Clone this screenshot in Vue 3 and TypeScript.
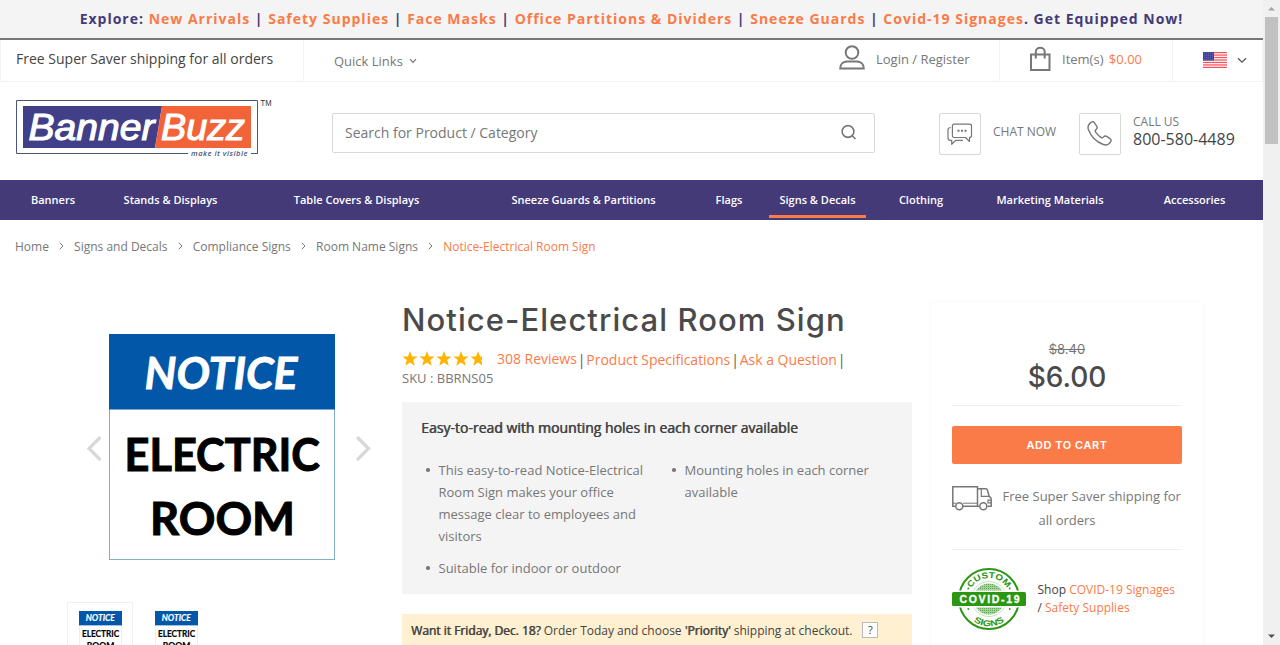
<script setup lang="ts">
interface Crumb { label: string; current?: boolean }

const promos: string[] = [
  'New Arrivals', 'Safety Supplies', 'Face Masks', 'Office Partitions & Dividers', 'Sneeze Guards', 'Covid-19 Signages',
]
const menu: string[] = [
  'Banners', 'Stands & Displays', 'Table Covers & Displays', 'Sneeze Guards & Partitions', 'Flags',
  'Signs & Decals', 'Clothing', 'Marketing Materials', 'Accessories',
]
const activeMenu = 'Signs & Decals'
const crumbs: Crumb[] = [
  { label: 'Home' }, { label: 'Signs and Decals' }, { label: 'Compliance Signs' },
  { label: 'Room Name Signs' }, { label: 'Notice-Electrical Room Sign', current: true },
]
const stars: number[] = [0, 17, 34, 51, 68]
const stripes: number[] = [0, 1, 2, 3, 4, 5, 6]
</script>

<template>
  <div class="window">
    <div class="page">
      <div class="promo">
        <span>Explore: </span>
        <template v-for="(p, i) in promos" :key="p"><a>{{ p }}</a><span>{{ i < promos.length - 1 ? ' | ' : '. ' }}</span></template>
        <span>Get Equipped Now!</span>
      </div>

      <div class="utility">
        <div class="u-ship">Free Super Saver shipping for all orders</div>
        <div class="u-links">Quick Links
          <svg width="8" height="6" viewBox="0 0 8 6"><path d="M1 1.2 L4 4.3 L7 1.2" fill="none" stroke="#777" stroke-width="1.2" /></svg>
        </div>
        <div class="u-login">
          <svg width="26" height="26" viewBox="0 0 26 26" fill="none" stroke="#777" stroke-width="2">
            <circle cx="13" cy="7.5" r="6.3" />
            <path d="M1.2 23.6 C1.2 18.5 4.6 16.6 8 16.6 H18 C21.4 16.6 24.8 18.5 24.8 23.6 Z" />
          </svg>
          <span>Login / Register</span>
        </div>
        <div class="u-cart">
          <svg width="22" height="26" viewBox="0 0 22 26" fill="none" stroke="#777" stroke-width="2">
            <path d="M2 8.5 H20.5 V24 H2 Z" /><path d="M6.8 12.5 V6 C6.8 0.4 15.7 0.4 15.7 6 V12.5" />
          </svg>
          <span>Item(s) <b>$0.00</b></span>
        </div>
        <div class="u-flag">
          <svg width="24" height="16" viewBox="0 0 24 16">
            <rect width="24" height="16" fill="#fff" />
            <rect v-for="s in stripes" :key="s" x="0" :y="s * 2.46" width="24" height="1.25" fill="#f8525c" />
            <rect width="11" height="8.5" fill="#42459b" />
            <g fill="#8d92cb"><template v-for="r in 4" :key="r"><circle v-for="c in 5" :key="c" :cx="c * 2 - 0.6" :cy="r * 2 - 0.7" r="0.4" /></template></g>
          </svg>
          <svg class="caret" width="10" height="7" viewBox="0 0 10 7"><path d="M1 1.2 L5 5.2 L9 1.2" fill="none" stroke="#555" stroke-width="1.3" /></svg>
        </div>
      </div>

      <header class="header">
        <svg class="logo" width="260" height="64" viewBox="0 -2 260 64">
          <path d="M172 53.5 H0.5 V0.5 H241.5 V53.5 H235" fill="none" stroke="#4b5576" />
          <path d="M7 6 H146 L139 48 H7 Z" fill="#403f88" />
          <path d="M146 6 H235 V48 H139 Z" fill="#f26339" />
          <g fill="#fff" stroke="#fff" stroke-width="1.1" font-family="'Liberation Sans', Arial, sans-serif" font-style="italic" font-size="37">
            <text x="12.5" y="40" textLength="126" lengthAdjust="spacingAndGlyphs">Banner</text>
            <text x="145" y="40" textLength="84" lengthAdjust="spacingAndGlyphs">Buzz</text>
          </g>
          <text x="175" y="56" font-family="'Open Sans', sans-serif" font-style="italic" font-weight="600" font-size="7.5" fill="#4b5576" textLength="56.5">make it visible</text>
          <text x="244.5" y="6" font-family="'Liberation Sans', Arial, sans-serif" font-size="8.5" fill="#333" textLength="11" lengthAdjust="spacingAndGlyphs">TM</text>
        </svg>
        <div class="search">
          <span>Search for Product / Category</span>
          <svg width="16" height="16" viewBox="0 0 16 16" fill="none" stroke="#777" stroke-width="1.6"><circle cx="7" cy="7.5" r="5.9" /><path d="M10.5 11 L14.5 15" /></svg>
        </div>
        <div class="icon-box chat">
          <svg width="26" height="23" viewBox="0 0 26 23" fill="none" stroke="#777" stroke-width="1.2" stroke-linejoin="round">
            <path d="M7 1.2 H22.5 Q24.5 1.2 24.5 3 V12.5 Q24.5 14.5 22.5 14.5 V18.5 L18.5 14.5 H7 Q5.4 14.5 5.4 12.5 V3 Q5.4 1.2 7 1.2 Z" />
            <path d="M3.5 4.5 Q1 4.7 1 7 V15 Q1 17.3 3.5 17.3 H4.7 V21.3 L8.8 17.3 H16" />
            <path d="M10.5 7.7 h2 M14 7.7 h2 M17.5 7.7 h2" stroke-width="2" />
          </svg>
        </div>
        <div class="chat-label">CHAT NOW</div>
        <div class="icon-box phone">
          <svg width="25" height="25" viewBox="0 0 25 25" fill="none" stroke="#777" stroke-width="1.4" stroke-linejoin="round">
            <path d="M4.3 1.2 C5.5 0.3 6.7 0.7 7.5 1.9 L9.8 5.3 C10.6 6.6 10.2 7.5 9.2 8.4 C8 9.3 8 10.2 8.8 11.3 C10.3 13.3 12 15 14 16.4 C15.1 17.1 15.8 16.9 16.6 15.9 C17.5 14.8 18.5 14.6 19.7 15.4 L23 17.6 C24.3 18.5 24.5 19.5 23.6 20.8 C21.8 23.6 19.5 24.6 16.3 23.5 C9.5 21 3.8 15.2 1.4 8.5 C0.3 5.3 1.5 3.1 4.3 1.2 Z" />
          </svg>
        </div>
        <div class="call"><span>CALL US</span><strong>800-580-4489</strong></div>
      </header>

      <nav class="menu">
        <a v-for="m in menu" :key="m" :class="{ active: m === activeMenu }">{{ m }}</a>
      </nav>

      <div class="crumbs">
        <template v-for="(c, i) in crumbs" :key="c.label">
          <svg v-if="i > 0" width="5" height="8" viewBox="0 0 5 8"><path d="M0.8 0.8 L4 4 L0.8 7.2" fill="none" stroke="#777" /></svg>
          <span :class="{ current: c.current }">{{ c.label }}</span>
        </template>
      </div>

      <main class="product">
        <section class="gallery">
          <div class="stage">
            <svg width="16" height="26" viewBox="0 0 16 26"><path d="M12.5 3 L2 13.5 L12.5 24" fill="none" stroke="#d8d8d8" stroke-width="3.2" stroke-linecap="round" /></svg>
            <svg width="226" height="226" viewBox="0 0 226 226">
              <use href="#sign" />
              <defs>
                <g id="sign" font-family="Lato, 'Open Sans', sans-serif" font-weight="700">
                  <rect x="0.5" y="0.5" width="225" height="225" fill="#fff" stroke="#7fb0c8" />
                  <rect width="226" height="75.5" fill="#0257a8" />
                  <text x="35.5" y="54.5" fill="#fff" stroke="#fff" stroke-width="0.8" font-style="italic" font-size="44.5" textLength="153" lengthAdjust="spacingAndGlyphs">NOTICE</text>
                  <g fill="#000" stroke="#000" stroke-width="1">
                    <text x="15.5" y="136.5" font-size="45.5" textLength="195.5" lengthAdjust="spacingAndGlyphs">ELECTRIC</text>
                    <text x="41" y="200.5" font-size="45.5" textLength="145" lengthAdjust="spacingAndGlyphs">ROOM</text>
                  </g>
                </g>
              </defs>
            </svg>
            <svg width="16" height="26" viewBox="0 0 16 26"><path d="M3 3 L13.5 13.5 L3 24" fill="none" stroke="#d8d8d8" stroke-width="3.2" stroke-linecap="round" /></svg>
          </div>
          <div class="thumbs">
            <div v-for="t in 2" :key="t" class="thumb" :class="{ selected: t === 1 }">
              <svg width="43" height="43" viewBox="0 0 226 226"><use href="#sign" /></svg>
            </div>
          </div>
        </section>

        <section class="info">
          <h1>Notice-Electrical Room Sign</h1>
          <div class="rating">
            <svg class="stars" width="80" height="16" viewBox="0 0 80 16">
              <path v-for="x in stars" :key="x" :transform="`translate(${x} 0)`" fill="#ffb400" d="M8 0 L10 5.4 L15.6 5.6 L11.2 9.1 L12.8 14.7 L8 11.5 L3.2 14.7 L4.8 9.1 L0.4 5.6 L6 5.4 Z" />
            </svg>
            <a class="reviews">308 Reviews</a><i>|</i><a>Product Specifications</a><i>|</i><a>Ask a Question</a><i>|</i>
          </div>
          <div class="sku">SKU : BBRNS05</div>
          <div class="features">
            <h2>Easy-to-read with mounting holes in each corner available</h2>
            <div class="cols">
              <ul>
                <li>This easy-to-read Notice-Electrical<br>Room Sign makes your office<br>message clear to employees and<br>visitors</li>
                <li>Suitable for indoor or outdoor</li>
              </ul>
              <ul><li>Mounting holes in each corner<br>available</li></ul>
            </div>
          </div>
          <div class="delivery">
            <span><b>Want it Friday, Dec. 18?</b> Order Today and choose <b>'Priority'</b> shipping at checkout.</span>
            <span class="help">?</span>
          </div>
        </section>

        <aside class="buy">
          <div class="old">$8.40</div>
          <div class="price">$6.00</div>
          <button class="add">ADD TO CART</button>
          <div class="ship">
            <div class="ship-first">
              <svg width="40" height="25" viewBox="0 0 40 25" fill="none" stroke="#777" stroke-width="1.5">
                <path d="M3 20.2 H0.8 V0.8 H25.5 V20.2 H11" /><path d="M0.8 17.2 H4 M11 17.2 H25.5" stroke-width="1" />
                <path d="M25.5 2.7 H34 Q35 2.7 35.4 4 L37.2 10.5 Q39.2 11.5 39.2 13 V20.2 H35.5 M27.5 20.2 H25" />
                <path d="M29.3 3 V10.3 H37" stroke-width="1.2" /><path d="M39 14.2 H36 V16.8 H39" stroke-width="1.2" />
                <circle cx="7.3" cy="20.3" r="3.5" fill="#fff" /><circle cx="31.3" cy="20.3" r="3.5" fill="#fff" />
              </svg>
              <span>Free Super Saver shipping for</span>
            </div>
            <div>all orders</div>
          </div>
          <div class="covid">
            <svg width="74" height="62" viewBox="0 0 74 62">
              <defs>
                <pattern id="halftone" width="2" height="2" patternUnits="userSpaceOnUse"><rect width="2" height="2" fill="#a9d09f" /><rect width="1" height="1" fill="#5da94f" /></pattern>
                <path id="arc-top" d="M16 31 A21 21 0 0 1 58 31" />
                <path id="arc-bottom" d="M9.8 31 A27.2 27.2 0 0 0 64.2 31" />
              </defs>
              <circle cx="37" cy="31" r="30" fill="#fff" stroke="#2a9611" stroke-width="2" />
              <circle cx="37" cy="31" r="17.5" fill="none" stroke="#9bcb90" stroke-width="0.6" />
              <circle cx="37" cy="31" r="15.5" fill="url(#halftone)" />
              <g fill="#2a9611" font-family="'Liberation Sans', Arial, sans-serif" font-weight="700" font-size="8.5" text-anchor="middle">
                <text textLength="43" lengthAdjust="spacingAndGlyphs"><textPath href="#arc-top" startOffset="50%">CUSTOM</textPath></text>
                <text textLength="33" lengthAdjust="spacingAndGlyphs"><textPath href="#arc-bottom" startOffset="50%">SIGNS</textPath></text>
              </g>
              <g fill="#2a9611"><circle cx="16.3" cy="20.5" r="0.9" /><circle cx="57.7" cy="20.5" r="0.9" /><circle cx="16.3" cy="41" r="0.9" /><circle cx="57.7" cy="41" r="0.9" /></g>
              <rect y="22.5" width="74" height="17" fill="#fff" />
              <rect y="24" width="74" height="14" rx="1.5" fill="#2a9611" />
              <text x="7.5" y="34.6" fill="#fff" stroke="#fff" stroke-width="0.3" font-family="'Liberation Sans', Arial, sans-serif" font-weight="700" font-size="10.5" textLength="60">COVID-19</text>
            </svg>
            <p>Shop <a>COVID-19 Signages</a><br>/ <a>Safety Supplies</a></p>
          </div>
        </aside>
      </main>
    </div>

    <div class="scrollbar">
      <svg width="17" height="17" viewBox="0 0 17 17"><path d="M5 10.5 L8.500 7 L12 10.5 Z" fill="#a3a3a3" /></svg>
      <div class="thumb-bar"></div>
      <svg width="17" height="17" viewBox="0 0 17 17"><path d="M5 6.5 L8.500 10 L12 6.5 Z" fill="#505050" /></svg>
    </div>
  </div>
</template>

<style>
body { margin: 0; overflow: hidden; background: #fff; }
</style>

<style scoped>
* { box-sizing: border-box; }
.window { display: flex; width: 1280px; height: 645px; overflow: hidden; font-family: "Open Sans", sans-serif; color: #777; }
.page { width: 1263px; height: 645px; overflow: hidden; flex: none; }
a { color: #fb7b48; }
.promo { height: 40px; background: #f4f4f4; border-bottom: 2px solid #777; color: #453a78; font-weight: 700; font-size: 14px; line-height: 37px; letter-spacing: 1px; text-align: center; white-space: nowrap; }

.utility { display: flex; height: 42px; border: 1px solid #f3f3f3; border-top: 0; white-space: nowrap; font-size: 13px; }
.u-ship { width: 303px; padding-left: 15px; border-right: 1px solid #f3f3f3; font-size: 14px; line-height: 38px; color: #444; }
.u-links { width: 505px; padding-left: 30px; line-height: 43px; }
.u-links svg { margin-left: 3px; vertical-align: 2px; }
.u-login { display: flex; width: 191px; padding-left: 30px; border-right: 1px solid #f3f3f3; line-height: 39px; }
.u-login svg { margin: 5px 11px 0 0; }
.u-cart { display: flex; width: 173px; padding-left: 29px; border-right: 1px solid #f3f3f3; line-height: 39px; }
.u-cart svg { margin: 6px 11px 0 0; }
.u-cart b { margin-left: 2px; color: #fb7b48; font-weight: 400; }
.u-flag { display: flex; padding-left: 30px; padding-top: 12px; }
.caret { margin: 5px 0 0 10px; }

.header { display: flex; height: 98px; white-space: nowrap; }
.logo { margin: 16px 0 0 16px; }
.search { display: flex; width: 543px; height: 40px; margin: 31px 64px 0 56px; padding: 0 17px 2px 12px; justify-content: space-between; align-items: center; border: 1px solid #d8d8d8; border-radius: 2px; font-size: 14px; }
.icon-box { display: flex; width: 42px; height: 42px; margin-top: 31px; align-items: center; justify-content: center; border: 1px solid #d8d8d8; border-radius: 2px; }
.icon-box.phone { padding-right: 1px; padding-bottom: 1px; }
.chat-label { width: 86px; margin: 41px 0 0 12px; font-size: 12px; line-height: 18px; }
.call { display: flex; flex-direction: column; margin: 31px 0 0 12px; font-size: 12px; line-height: 17px; }
.call strong { font-size: 16px; font-weight: 400; line-height: 18px; color: #444; }

.menu { display: grid; grid-template-columns: 106px 129px 243px 211px 80px 97px 110px 148px 139px; height: 40px; background: #453a78; }
.menu a { height: 38px; padding-top: 2px; color: #fff; font-size: 11px; font-weight: 600; line-height: 35px; text-align: center; white-space: nowrap; }
.menu a.active { border-bottom: 3px solid #fb7b48; }
.menu a:last-child { padding-left: 2px; }

.crumbs { display: flex; align-items: center; height: 52px; padding-left: 15px; font-size: 12px; white-space: nowrap; }
.crumbs svg { margin: 0 10.2px 0 10px; }
.crumbs .current { color: #fb7b48; }

.product { display: flex; height: 373px; }
.gallery { width: 402px; }
.stage { display: flex; align-items: center; gap: 6px; height: 226px; margin: 62px 0 0 87px; }
.stage svg:first-child, .stage svg:last-child { margin-top: 2px; }
.stage svg:last-child { margin-left: 14px; }
.thumbs { display: flex; gap: 10px; margin: 42px 0 0 67px; }
.thumb { width: 66px; height: 66px; padding: 8px 10.5px; border: 1px solid transparent; }
.thumb.selected { border-color: #f0f0f0; }

.info { width: 510px; padding-top: 28px; white-space: nowrap; }
h1 { margin: 0; color: #4a4a4a; font-family: Inter, sans-serif; font-size: 31px; font-weight: 500; line-height: 40px; letter-spacing: 1.07px; }
.rating { display: flex; height: 26px; margin-top: 8px; font-size: 14px; line-height: 24px; letter-spacing: -0.02px; }
.stars { margin: 3px 15px 0 0; }
.rating i { width: 9.5px; text-align: center; font-style: normal; color: #555; }
.reviews { margin-top: -1px; }
.sku { margin-top: -5px; font-size: 13px; line-height: 18px; }
.features { height: 192px; margin-top: 15px; padding: 14px 19px; background: #f4f4f4; }
h2 { margin: 0; color: #444; font-size: 14px; font-weight: 400; line-height: 23px; text-shadow: 0.6px 0 0 #444; }
.cols { display: flex; padding-top: 20px; }
ul { flex: none; width: 246px; margin: 0; padding: 0 0 0 17.5px; list-style: none; }
li { position: relative; margin-bottom: 10px; font-size: 13px; line-height: 22px; }
li::before { content: ""; position: absolute; left: -12.5px; top: 9px; width: 3.5px; height: 3.5px; border-radius: 50%; background: #777; }
.delivery { display: flex; height: 40px; margin-top: 20px; padding: 8px 9px; gap: 10px; background: #fff0d1; color: #444; font-size: 12px; line-height: 17px; }
.delivery b { font-weight: 400; text-shadow: 0.6px 0 0 #444; }
.help { width: 16px; height: 16px; border: 1px solid #bbb; background: #fff; font-size: 11px; line-height: 14px; text-align: center; }

.buy { width: 272px; height: 400px; margin: 30px 0 0 19px; padding: 37px 21px 0; box-shadow: 0 0 4px rgba(0, 0, 0, 0.04); text-align: center; font-size: 13px; }
.old { font-family: Inter, sans-serif; font-size: 13px; line-height: 20px; text-decoration: line-through; }
.price { height: 47px; border-bottom: 1px solid #f0f0f0; color: #4a4a4a; font-family: Inter, sans-serif; font-size: 28px; font-weight: 500; line-height: 36px; }
.add { display: block; width: 230px; height: 38px; margin: 20px 0 0; border: 0; border-radius: 2px; background: #fb7b48; color: #fff; font-family: Inter, sans-serif; font-size: 11px; font-weight: 600; letter-spacing: 0.55px; }
.ship { height: 86px; padding-top: 20px; border-bottom: 1px solid #f0f0f0; line-height: 24px; white-space: nowrap; }
.ship-first { display: flex; height: 24px; }
.ship-first svg { margin: 2px 10.5px 0 0; }
.covid { display: flex; padding-top: 18px; }
.covid p { margin: 13px 0 0 11.5px; color: #444; font-size: 12px; line-height: 18px; text-align: left; white-space: nowrap; }

.scrollbar { display: flex; flex-direction: column; width: 17px; height: 645px; background: #f0f0f0; }
.thumb-bar { width: 13px; height: 127px; margin: 0 2px auto; background: #c1c1c1; }
</style>
